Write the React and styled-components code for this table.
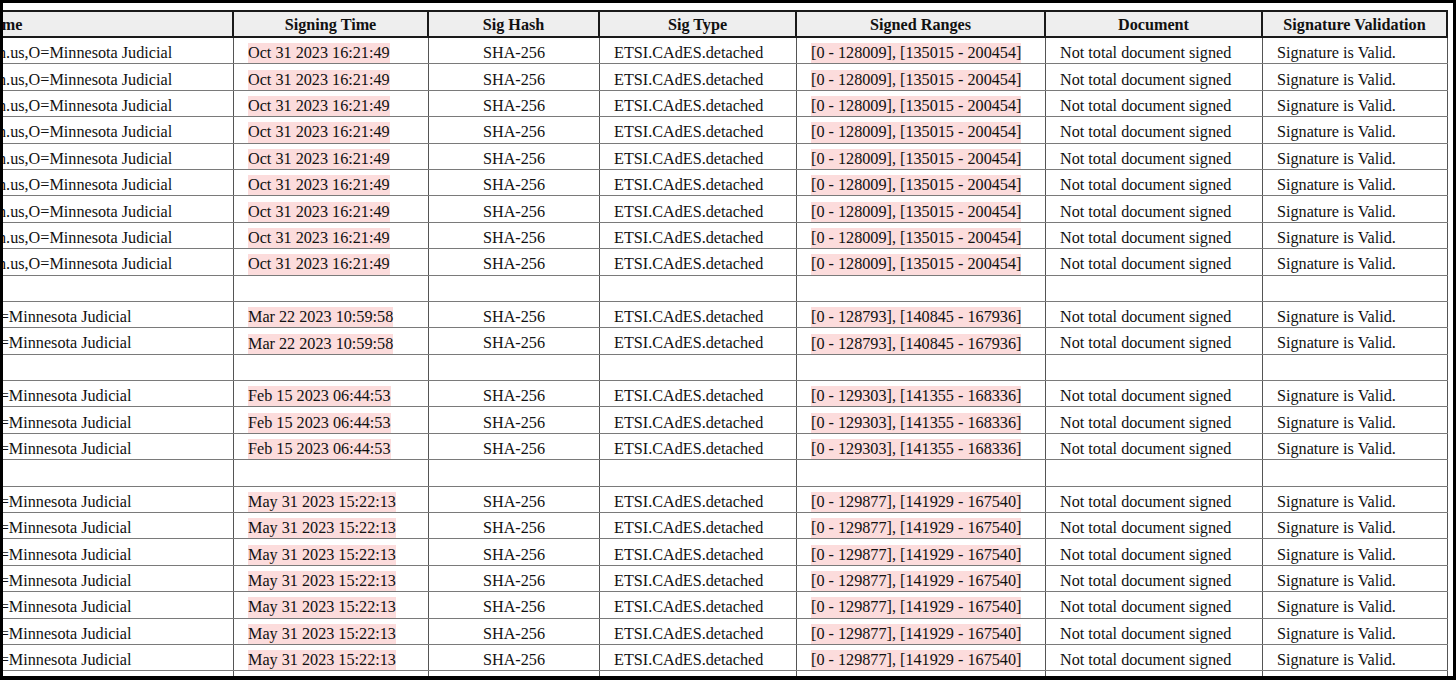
import styled, { createGlobalStyle } from "styled-components";

const GlobalStyle = createGlobalStyle`
  html, body {
    margin: 0;
    padding: 0;
    background: #000;
  }
`;

const COLS = "231px 195px 171px 197px 249px 217px 185px";

const Frame = styled.div`
  box-sizing: border-box;
  width: 1456px;
  height: 680px;
  border: 3px solid #000;
  border-bottom-width: 4px;
  background: #fff;
  overflow: hidden;
  padding-top: 7px;
  font-family: "Liberation Serif", "Times New Roman", serif;
  font-size: 16.2px;
  color: #111;
`;

const Sheet = styled.div`
  display: flex;
  flex-direction: column;
  width: 1445px;
`;

const HeaderRow = styled.div`
  display: grid;
  grid-template-columns: ${COLS};
  height: 28px;
  box-sizing: border-box;
  border-top: 2px solid #1a1a1a;
  border-bottom: 2px solid #1a1a1a;
  background: #eeeeee;
`;

const HeadCell = styled.div`
  display: flex;
  align-items: center;
  justify-content: ${(p) => (p.$clip ? "flex-start" : "center")};
  padding-top: 2px;
  border-right: 2px solid #1a1a1a;
  font-weight: bold;
  overflow: hidden;
  white-space: nowrap;
`;

const Row = styled.div`
  display: grid;
  grid-template-columns: ${COLS};
  height: 26.4px;
  flex: none;
  box-sizing: border-box;
  border-bottom: 1px solid #7a7a7a;
`;

const Cell = styled.div`
  display: flex;
  align-items: center;
  justify-content: ${(p) => (p.$center ? "center" : "flex-start")};
  padding-left: ${(p) => (p.$center ? "0" : "14px")};
  padding-top: 6px;
  border-right: 1px solid #555;
  overflow: hidden;
  white-space: nowrap;
`;

const ClippedCell = styled(Cell)`
  padding-left: 0;
`;

const Shifted = styled.span`
  margin-left: ${(p) => p.$shift}px;
`;

const Mark = styled.span`
  background: #fcdcdc;
  padding: 1px 0;
`;

const groups = [
  { who: "n.us,O=Minnesota Judicial", shift: -5, time: "Oct 31 2023 16:21:49", ranges: "[0 - 128009], [135015 - 200454]", count: 9 },
  { who: "O=Minnesota Judicial", shift: -15, time: "Mar 22 2023 10:59:58", ranges: "[0 - 128793], [140845 - 167936]", count: 2 },
  { who: "O=Minnesota Judicial", shift: -15, time: "Feb 15 2023 06:44:53", ranges: "[0 - 129303], [141355 - 168336]", count: 3 },
  { who: "O=Minnesota Judicial", shift: -15, time: "May 31 2023 15:22:13", ranges: "[0 - 129877], [141929 - 167540]", count: 7 },
];

const rows = [];
groups.forEach((g, gi) => {
  for (let i = 0; i < g.count; i++) rows.push(g);
  rows.push(null);
  if (gi === groups.length - 1) rows.push(null);
});

function EmptyRow() {
  return (
    <Row>
      {Array.from({ length: 7 }).map((_, i) => (
        <Cell key={i} />
      ))}
    </Row>
  );
}

export default function App() {
  return (
    <>
      <GlobalStyle />
      <Frame>
        <Sheet>
          <HeaderRow>
            <HeadCell $clip>
              <Shifted $shift={-21}>Name</Shifted>
            </HeadCell>
            <HeadCell>Signing Time</HeadCell>
            <HeadCell>Sig Hash</HeadCell>
            <HeadCell>Sig Type</HeadCell>
            <HeadCell>Signed Ranges</HeadCell>
            <HeadCell>Document</HeadCell>
            <HeadCell>Signature Validation</HeadCell>
          </HeaderRow>
          {rows.map((r, i) =>
            r ? (
              <Row key={i}>
                <ClippedCell>
                  <Shifted $shift={r.shift}>{r.who}</Shifted>
                </ClippedCell>
                <Cell>
                  <Mark>{r.time}</Mark>
                </Cell>
                <Cell $center>SHA-256</Cell>
                <Cell>ETSI.CAdES.detached</Cell>
                <Cell>
                  <Mark>{r.ranges}</Mark>
                </Cell>
                <Cell>Not total document signed</Cell>
                <Cell>Signature is Valid.</Cell>
              </Row>
            ) : (
              <EmptyRow key={i} />
            )
          )}
        </Sheet>
      </Frame>
    </>
  );
}
